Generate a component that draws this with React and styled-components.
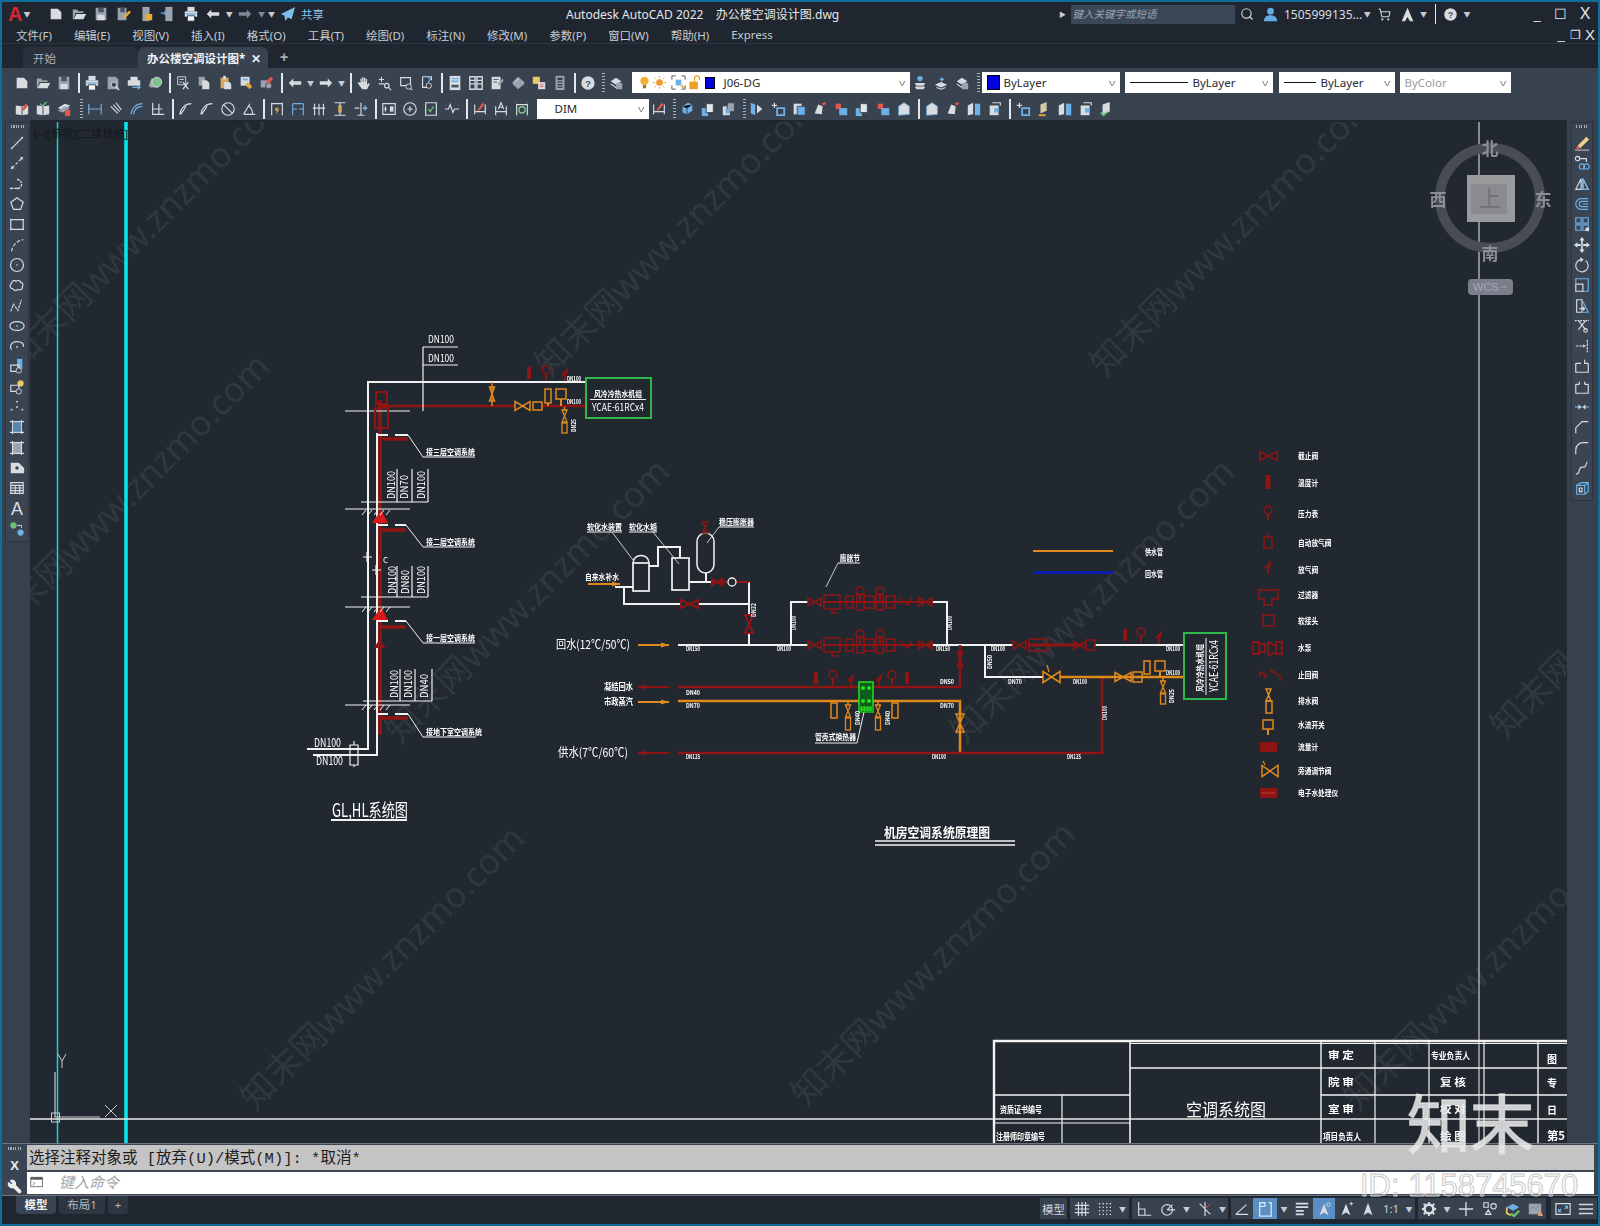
import React from 'react'
import styled, { createGlobalStyle } from 'styled-components'
import { Search, ShoppingCart, Wrench } from 'lucide-react'

const G = '#d8dce1'
const M = '#9aa3ae'
const B = '#6db0e6'
const O = '#e6a93c'
const RD = '#e2574c'
const WHITE = '#f2f2f2'
const RED = '#8f1414'
const ORG = '#e08a1e'
const GRN = '#2fb84a'

const CJK = '"Noto Sans", "Noto Sans CJK SC", sans-serif'

const Global = createGlobalStyle`
  html, body { margin: 0; padding: 0; background: #1f2630; overflow: hidden; }
  * { box-sizing: border-box; }
`

const Shell = styled.div`
  position: relative;
  width: 1600px;
  height: 1226px;
  border: 2px solid #0e6d99;
  background: #1f2630;
  display: flex;
  flex-direction: column;
  font-family: ${CJK};
  color: #d9dde2;
  overflow: hidden;
`
const TitleBar = styled.div`
  height: 22px;
  flex: none;
  display: flex;
  align-items: center;
  padding-top: 2px;
  font-size: 12px;
`
const Qat = styled.div`
  width: 564px;
  display: flex;
  align-items: center;
  padding-left: 6px;
`
const AppLogo = styled.span`
  color: #d8262c;
  font: 700 20px "Liberation Sans", sans-serif;
  width: 14px;
  line-height: 20px;
`
const Chev = styled.span`
  display: inline-block;
  width: ${p => p.$w || 10}px;
  flex: none;
  text-align: center;
  font-size: 7px;
  color: ${p => p.$c || '#c7ccd2'};
`
const QatBtn = styled.span`
  width: 22.4px;
  height: 20px;
  flex: none;
  display: flex;
  align-items: center;
  justify-content: center;
`
const Gap = styled.span`
  width: ${p => p.$w}px;
  flex: none;
`
const ShareText = styled.span`
  color: #8fc3ea;
  font-size: 11.5px;
  margin-left: 2px;
`
const DocTitle = styled.div`
  flex: none;
  font-size: 12px;
  color: #e4e7ea;
  white-space: pre;
`
const TitleRight = styled.div`
  margin-left: auto;
  display: flex;
  align-items: center;
`
const SearchBox = styled.div`
  width: 164px;
  height: 19px;
  margin-left: 4px;
  background: #3a4757;
  color: #98a4b2;
  font-size: 10.5px;
  font-style: italic;
  line-height: 19px;
  padding-left: 2px;
`
const UserName = styled.span`
  font-size: 12px;
  margin-left: 2px;
`
const WinBtn = styled.span`
  width: ${p => p.$w || 24}px;
  height: 20px;
  flex: none;
  display: flex;
  align-items: center;
  justify-content: center;
  font: 400 ${p => p.$f || 15}px "Liberation Sans", sans-serif;
  color: #e6e8eb;
`
const MenuBar = styled.div`
  height: 20px;
  flex: none;
  display: flex;
  align-items: center;
  padding-left: 14px;
  padding-top: 2px;
  gap: 22px;
  font-size: 11.5px;
  color: #c6ccd3;
  border-bottom: 1px solid #2d3540;
`
const MenuRight = styled.div`
  margin-left: auto;
  display: flex;
  align-items: center;
`
const Tabs = styled.div`
  height: 24px;
  flex: none;
  display: flex;
  align-items: flex-end;
  padding-left: 21px;
`
const Tab = styled.div`
  width: ${p => p.$w}px;
  height: 21px;
  background: ${p => (p.$on ? '#39424f' : '#2a313c')};
  color: ${p => (p.$on ? '#eef0f2' : '#a9b0b9')};
  font-size: 11.5px;
  font-weight: ${p => (p.$on ? 700 : 400)};
  line-height: 21px;
  padding-left: ${p => p.$pad}px;
  padding-top: 2px;
  border-radius: 6px 6px 0 0;
  display: flex;
  align-items: center;
  gap: 6px;
`
const TabPlus = styled.span`
  font: 700 14px "Liberation Sans", sans-serif;
  color: #aab1ba;
  margin-left: 12px;
  line-height: 21px;
`
const Band = styled.div`
  height: 52px;
  flex: none;
  background: #39424f;
`
const ToolRow = styled.div`
  height: ${p => p.$h}px;
  display: flex;
  align-items: center;
  padding-left: ${p => p.$pad || 0}px;
  padding-top: ${p => p.$top || 0}px;
`
const Btn = styled.span`
  width: 21px;
  height: 21px;
  flex: none;
  display: flex;
  align-items: center;
  justify-content: center;
`
const Sep = styled.span`
  width: ${p => p.$w || 7}px;
  height: 20px;
  flex: none;
  position: relative;
  &::after {
    content: '';
    position: absolute;
    left: 50%;
    top: 0;
    bottom: 0;
    width: ${p => (p.$grip ? 3 : 1.5)}px;
    background: ${p =>
      p.$grip
        ? 'repeating-linear-gradient(#a9b0ba 0 1px, transparent 1px 3px)'
        : '#e3e6ea'};
  }
`
const Combo = styled.div`
  width: ${p => p.$w}px;
  height: ${p => p.$h || 21}px;
  margin-left: ${p => p.$ml || 0}px;
  flex: none;
  background: #fff;
  color: ${p => p.$c || '#2a2a2a'};
  display: flex;
  align-items: center;
  font-size: 11.5px;
  padding: 0 5px;
  position: relative;
`
const ComboArrow = styled.span`
  margin-left: auto;
  color: #8a8a8a;
  font-size: 9px;
  transform: scaleX(1.4);
`
const Swatch = styled.span`
  width: ${p => p.$s || 10}px;
  height: ${p => p.$s2 || 12}px;
  background: #0000e0;
  border: 1px solid #000;
  flex: none;
`
const RuleLine = styled.span`
  width: ${p => p.$w}px;
  height: 1px;
  background: #111;
  margin-right: 5px;
  flex: none;
`
const Main = styled.div`
  flex: 1;
  min-height: 0;
  display: flex;
`
const Rail = styled.div`
  width: ${p => p.$w}px;
  flex: none;
  background: #37404d;
  padding: 2px ${p => p.$pr}px 0 ${p => p.$pl}px;
`
const RailPanel = styled.div`
  background: #3b4552;
  border: 1px solid #2c333e;
  display: flex;
  flex-direction: column;
  align-items: center;
  padding-top: 2px;
  padding-bottom: 2px;
`
const RailGrip = styled.span`
  width: 13px;
  height: 7px;
  flex: none;
  background: repeating-linear-gradient(90deg, #a9b0ba 0 1px, transparent 1px 2.5px);
  margin-bottom: 1px;
  background-size: 100% 3px;
  background-repeat: no-repeat;
`
const RailBtn = styled.span`
  height: 20.3px;
  width: 100%;
  flex: none;
  display: flex;
  align-items: center;
  justify-content: center;
`
const Canvas = styled.div`
  flex: 1;
  min-width: 0;
  position: relative;
  background: #212830;
  overflow: hidden;
  margin-top: 2px;
`
const CanvasSvg = styled.svg`
  display: block;
  width: 1537px;
  height: 1021px;
  filter: blur(0.35px);
`
const ViewLabel = styled.div`
  position: absolute;
  left: 4px;
  top: 3px;
  color: #14171b;
  font-size: 11px;
`
const CmdArea = styled.div`
  height: 52px;
  flex: none;
  display: flex;
  flex-direction: column;
  background: #3a4453;
  border-top: 1px solid #6f7681;
  position: relative;
  padding: 1px 4px 1px 25px;
`
const CmdTool = styled.div`
  position: absolute;
  left: 0;
  top: 0;
  bottom: 0;
  width: 25px;
  display: flex;
  flex-direction: column;
  align-items: center;
  padding-top: 3px;
  color: #eceef0;
`
const CmdX = styled.span`
  font: 700 13px "Liberation Sans", sans-serif;
  margin-top: 3px;
  height: 17px;
`
const CmdHistory = styled.div`
  height: 26px;
  background: #c4c4c4;
  color: #1c1c1c;
  font: 400 15.5px "Liberation Mono", "Noto Sans CJK SC", monospace;
  line-height: 29px;
  padding-left: 2px;
  white-space: pre;
  overflow: hidden;
`
const CmdInput = styled.div`
  height: 22px;
  margin-top: 2px;
  background: #fff;
  display: flex;
  align-items: center;
  padding: 0 0 3px 3px;
  color: #a4a4a4;
  font-size: 15px;
  font-style: italic;
  gap: 7px;
`
const StatusBar = styled.div`
  height: 29px;
  flex: none;
  display: flex;
  align-items: flex-start;
  padding-top: 2px;
  font-size: 11.5px;
  border-top: 1px solid #6f7681;
`
const LayoutTab = styled.div`
  width: ${p => p.$w}px;
  height: 18px;
  margin-top: -2px;
  background: ${p => (p.$on ? '#3a4351' : '#2e3641')};
  color: ${p => (p.$on ? '#f0f2f4' : '#b3b9c1')};
  font-weight: ${p => (p.$on ? 700 : 400)};
  font-size: 11.5px;
  text-align: center;
  line-height: 18px;
  border-radius: 0 0 4px 4px;
  margin-left: ${p => p.$ml || 0}px;
`
const StatusRight = styled.div`
  margin-left: auto;
  display: flex;
  gap: ${p => p.$gap || 3}px;
  padding-right: 1px;
`
const StatusGroup = styled.div`
  height: 21px;
  display: flex;
  align-items: center;
  background: #38414e;
  margin-left: ${p => p.$ml || 0}px;
`
const StatusCell = styled.span`
  width: ${p => p.$w || 22}px;
  height: 21px;
  flex: none;
  display: flex;
  align-items: center;
  justify-content: center;
  background: ${p => (p.$on ? '#5b8fc4' : 'transparent')};
  font-size: 11.5px;
  color: #cfd4da;
`
const StampCn = styled.div`
  position: absolute;
  left: 1405px;
  top: 1086px;
  font: 400 64px ${CJK};
  line-height: 72px;
  letter-spacing: -1px;
  color: rgba(236, 236, 236, 0.85);
  -webkit-text-stroke: 1.5px rgba(225, 225, 225, 0.8);
`
const StampId = styled.div`
  position: absolute;
  left: 1358px;
  top: 1168px;
  font: 400 31px "Liberation Sans", sans-serif;
  line-height: 32px;
  color: rgba(255, 255, 255, 0.25);
  -webkit-text-stroke: 1px #c9c9c9;
  white-space: pre;
`
const Mark = styled.text`
  font: 400 35px ${CJK};
  fill: rgba(255, 255, 255, 0.07);
`
const Cad = styled.text`
  font-family: "Noto Sans CJK SC", sans-serif;
  font-weight: ${p => p.$w || 700};
  fill: ${p => p.$c || '#ffffff'};
`

// toolbar / rail glyphs, all drawn on an 18x18 grid
const line = { fill: 'none', stroke: G, strokeWidth: 1.3 }
const blue = { fill: 'none', stroke: B, strokeWidth: 1.3 }
const dot = (x, y, c = G) => <circle cx={x} cy={y} r={1} fill={c} />

const ICONS = {
  doc: <path d="M3 3h8l4 4v8H3z" fill={G} />,
  open: <><path d="M2 4h5l1 2h6v2H5l-2 7H2z" fill={M} /><path d="M6 9h11l-3 6H3z" fill={G} /></>,
  save: <><path d="M3 2h12v14H3z" fill={M} /><path d="M6 2h6v5H6z" fill="#4a5361" /><path d="M5 10h8v6H5z" fill={G} /></>,
  saveas: <><path d="M3 2h10v14H3z" fill={M} /><path d="M6 2h5v5H6z" fill="#4a5361" /><path d="M9 15l2-5 5-5 2 2-5 5z" fill={O} /></>,
  phone: <><path d="M5 1h8v16H5z" fill={M} /><path d="M9 9h7v7H9z" fill={O} /></>,
  tablet: <><path d="M6 1h8v16H6z" fill={M} /><path d="M1 8h6M5 6l2 2-2 2" {...blue} /></>,
  print: <><path d="M5 1h8v5H5z" fill={G} /><path d="M2 6h14v6H2z" fill={G} /><path d="M5 11h8v6H5z" fill="#f4f5f6" stroke="#39424f" /><path d="M3 9h12" stroke={B} strokeWidth="1.5" /></>,
  preview: <><path d="M3 2h9l3 3v11H3z" fill={M} /><circle cx="10" cy="11" r="3" fill="#39424f" stroke={G} /><path d="M12 13l4 4" stroke={G} strokeWidth="1.5" /></>,
  plot: <><path d="M5 2h8v4H5zM2 6h14v6H2z" fill={G} /><path d="M7 14h9M13 12l3 2-3 2" {...blue} /></>,
  globe: <><path d="M2 12l3-8h8v10H4z" fill={M} /><circle cx="11" cy="8" r="5.5" fill="#7fc28e" stroke={G} /></>,
  cut: <><path d="M3 2h9v9H3z" fill="none" stroke={G} /><path d="M5 5h5M5 8h3" stroke={G} /><path d="M9 8l6 8M15 8l-6 8" stroke={G} strokeWidth="1.5" /></>,
  copy: <><path d="M3 2h7v10H3z" fill={M} /><path d="M7 6h5l3 3v7H7z" fill={G} /></>,
  paste: <><path d="M4 3h9v12H4z" fill="#d6a760" /><path d="M7 1h3v4H7z" fill={G} /><path d="M8 8h6l2 2v6H8z" fill={G} /></>,
  match: <><path d="M3 2h10v10H3z" fill={G} /><path d="M5 5h6" stroke={B} strokeWidth="2" /><path d="M8 11l3-3 5 5-3 3z" fill={O} /></>,
  brush: <><path d="M2 6h10v8H2z" fill={M} /><circle cx="11" cy="12" r="3.5" fill={M} stroke="#39424f" /><path d="M8 8l5-6 3 2-5 6z" fill={RD} /></>,
  undo: <path d="M7 4L2 9l5 5v-3h9V7H7z" fill={G} />,
  redo: <path d="M11 4l5 5-5 5v-3H2V7h9z" fill={G} />,
  redoD: <path d="M11 4l5 5-5 5v-3H2V7h9z" fill="#7f8894" />,
  hand: <path d="M5 9V4h1.5v4H7V2.5h1.5V8H9V3h1.5v5h.5V4.5h1.5V11l2-2 1 1-3 6H7l-3-4-2-3 1-1z" fill={G} />,
  zoomrt: <><path d="M5 2v6M2 5h6M2 10h6" stroke={G} strokeWidth="1.2" /><circle cx="11" cy="12" r="2.5" {...line} /><path d="M13 14l3 3" {...line} /></>,
  zoomwin: <><path d="M3 3h11v9H3z" {...line} /><circle cx="12" cy="13" r="3" fill="#39424f" stroke={G} /><path d="M14 15l2 2" {...line} /></>,
  zoomprev: <><path d="M4 2h10v4M4 2v12h5" {...line} /><path d="M10 2l3 3-3 3" {...blue} /><circle cx="11" cy="12" r="3" fill="none" stroke={G} /></>,
  props: <><path d="M3 1h12v16H3z" fill={G} /><path d="M5 4h8M5 7h8" stroke={B} strokeWidth="1.5" /><path d="M5 11h8v3H5z" fill="#4a5361" /></>,
  palette: <path d="M2 2h6v14H2zM10 2h6v14h-6zM2 6h6M2 10h6M10 6h6M10 10h6" fill="none" stroke={G} strokeWidth="1.5" />,
  sheet: <><path d="M3 2h10v14H3z" fill={G} /><path d="M5 5h6M5 8h4" stroke="#4a5361" /><path d="M10 9l6-5v3l-5 5z" fill={M} /></>,
  markup: <><path d="M3 8l6-6 7 6v2l-7 6-6-6z" fill={M} /><path d="M6 8l4-4" stroke={G} /></>,
  sticky: <><path d="M2 2h8v8H2z" fill="#e8c860" /><path d="M8 8h8v8H8z" fill={G} /><path d="M10 11h4M10 13h4" stroke={RD} /></>,
  calc: <><path d="M4 1h10v16H4z" fill={M} /><path d="M6 3h6v3H6z" fill="#39424f" /><path d="M6 8h6M6 11h6M6 14h6" stroke="#39424f" strokeWidth="1.5" /></>,
  help: <><circle cx="9" cy="9" r="7.5" fill={G} /><text x="9" y="13" textAnchor="middle" fontSize="11" fontWeight="700" fontFamily="Liberation Sans" fill="#4a5361">?</text></>,
  layers: <><path d="M3 7l6-4 6 4-6 4z" fill={G} /><path d="M3 10l6 4 6-4" {...line} /><path d="M9 9h7v7H9z" fill={M} /></>,
  layerP: <><circle cx="9" cy="4" r="3" fill={B} /><path d="M3 9h12l-2 3H5z" fill={G} /><path d="M3 13h12l-2 3H5z" fill={G} /></>,
  layerW: <><path d="M10 2l1 2 2 1-2 1-1 2-1-2-2-1 2-1z" fill={B} /><path d="M2 11l7-3 7 3-7 3z" fill={G} /><path d="M4 14l5 2 5-2" {...line} /></>,
  bulb: <><circle cx="9" cy="7" r="5" fill="#f1b233" /><path d="M7 12h4v4H7z" fill="#8a7a50" /></>,
  sun: <><circle cx="9" cy="9" r="4" fill="#f39a2a" /><path d="M9 1v3M9 14v3M1 9h3M14 9h3M3 3l2 2M13 13l2 2M3 15l2-2M13 5l2-2" stroke="#f39a2a" /></>,
  freeze: <><path d="M2 2h4M2 2v4M16 2h-4M16 2v4M2 16h4M2 16v-4M16 16h-4M16 16v-4" stroke="#555" /><path d="M6 6h6v6H6z" fill={B} /><path d="M12 12l3 3" stroke={O} strokeWidth="2" /></>,
  lock: <><path d="M3 8h10v9H3z" fill="#eba024" /><path d="M9 8V4a3 3 0 0 1 6 0v2" fill="none" stroke="#eba024" strokeWidth="1.5" /></>,
  dimline: <><path d="M2 3v12M16 3v12M2 9h14" {...blue} /></>,
  dimalign: <><path d="M3 6l8 8M9 2l6 8M6 4l7 8" {...line} /></>,
  dimarc: <path d="M2 15C3 8 8 3 15 3M5 15C6 9 10 6 15 6" {...blue} />,
  dimord: <><path d="M3 2v13h13M3 9h11M10 3v12" {...line} /></>,
  dimrad: <path d="M2 15C3 8 8 3 15 3M3 15L9 6" {...line} />,
  dimdia: <><circle cx="9" cy="9" r="7" {...line} /><path d="M4 4l10 10" {...line} /></>,
  dimang: <path d="M3 15h13M3 15L10 3M9 6c3 2 4 5 4 9" {...line} />,
  dimspace: <><path d="M3 2v14M15 2v14M3 3h12" {...line} /><path d="M7 8l4-1-2 3 3-1-4 6 1-4H7z" fill={O} /></>,
  dimbrk: <path d="M3 3v13M15 3v13M3 9h5M10 9h5M3 3h12" {...blue} />,
  dimtri: <path d="M4 3v13M9 3v13M14 3v13M2 8h14" {...line} />,
  dimins: <><path d="M3 2h12M3 16h12M9 2v14" {...line} /><path d="M7 5h4v8H7z" fill="#d6a760" /></>,
  dimjog: <><path d="M9 2v14M2 8h5M11 8h5M5 16h8" {...line} /><path d="M13 5l2 3-2 3" {...blue} /></>,
  dimbox: <><path d="M2 3h14v12H2z" {...line} /><path d="M5 6v6M3 9h4" {...line} /><path d="M10 6h4v6h-4z" fill={G} /></>,
  circledot: <><circle cx="9" cy="9" r="7" {...line} /><path d="M6 9h6M9 6v6" {...line} /></>,
  inspect: <><path d="M3 2h12v14H3z" {...line} /><path d="M6 9l2 3 4-6" stroke="#6ac27a" fill="none" strokeWidth="1.5" /></>,
  jog: <path d="M1 9h4l2-5 3 9 2-4h5" {...line} />,
  dimstyle: <><path d="M3 4v11M15 4v11M3 12h12" {...line} /><path d="M6 10l6-8 2 2-6 7z" fill={RD} /></>,
  dimA: <><path d="M3 6v10M15 6v10M3 12h12" {...line} /><path d="M6 9l3-7 3 7M7 7h4" {...line} /></>,
  dimup: <><path d="M3 3v13M15 3v13M3 4h12" {...line} /><circle cx="9" cy="10" r="3.5" fill="none" stroke="#7cc48a" strokeWidth="1.5" /></>,
  book: <><path d="M2 5l7 1 7-1v10l-7 1-7-1z" fill={G} /><path d="M9 6v10" stroke="#39424f" /><path d="M9 9l4-6 3 2-5 6z" fill={RD} /></>,
  bookok: <><path d="M2 5l7 1 7-1v10l-7 1-7-1z" fill={G} /><path d="M9 6v10" stroke="#39424f" /><path d="M6 3l2 3 5-5" stroke="#6ac27a" fill="none" strokeWidth="1.5" /></>,
  stack: <><path d="M2 8l8-5 6 2-8 5z" fill={G} /><path d="M2 11l8-5 6 2-8 5z" fill={M} /><path d="M10 10h6v7h-6z" fill={RD} /></>,
  cube: <><path d="M4 6l6-4 5 2v7l-6 4-5-2z" fill={B} /><path d="M4 6l5 2 6-4M9 8v7" stroke="#39424f" /></>,
  cubes: <><path d="M2 8h7v9H2z" fill={B} /><path d="M7 3h8v10H7z" fill="#e4e7ea" stroke="#39424f" /></>,
  cubes2: <><path d="M2 6h8v10H2z" fill={G} /><path d="M7 2h8v10H7z" fill={M} stroke="#39424f" /><path d="M5 9h5v5H5z" fill={B} /></>,
  splitB: <><path d="M2 2l5 2v12l-5-2z" fill={B} /><path d="M9 4l6 5-6 5z" fill={G} /></>,
  plusB: <><path d="M2 5h6M5 2v6" stroke={G} strokeWidth="1.4" /><path d="M8 8h8v8H8z" fill="none" stroke={B} strokeWidth="2" /></>,
  box: <><path d="M3 3h9v12H3z" fill={G} /><path d="M7 6h9v10H7z" fill={B} stroke="#39424f" /></>,
  flaker: <><path d="M3 14l4-10 5 2-1 9z" fill={G} /><path d="M11 3l3-2 2 2-3 2z" fill={RD} /></>,
  boxes: <><path d="M3 3h6v6H3z" fill={RD} /><path d="M7 8h9v8H7z" fill={B} /></>,
  shell: <path d="M3 6l6-4 6 4v9l-12 1z" fill={G} stroke={B} />,
  twin: <><path d="M2 5l6-3v13l-6 1z" fill={G} /><path d="M10 3h6v13h-6z" fill={B} /></>,
  chBox: <><path d="M3 5h10v11H3z" fill={G} /><path d="M6 2h9v3" {...line} /><path d="M8 8h5v5H8z" fill={B} /></>,
  lite: <><path d="M5 14V4l7-3v10z" fill="#d5c9a4" /><path d="M3 16h8" stroke={O} strokeWidth="2" /></>,
  lay: <><path d="M4 15V4l8-3v11z" fill={G} /><path d="M2 13l3 3 5-4" stroke="#6ac27a" fill="none" strokeWidth="2" /></>,
  // left rail
  rline: <><path d="M3 15L15 3" {...line} />{dot(3, 15)}{dot(15, 3)}</>,
  rxline: <><path d="M4 14L14 4" {...line} strokeDasharray="3 2" /><path d="M2 16l4-1-3-3zM16 2l-1 4-3-3z" fill={G} /></>,
  rpline: <><path d="M2 14h8M10 14c5 0 6-9 0-10" {...line} strokeDasharray="3 1" />{dot(2, 14)}{dot(10, 14)}{dot(10, 4)}</>,
  rpoly: <path d="M9 2l7 5-3 8H5L2 7z" {...line} />,
  rrect: <><path d="M2 4h14v11H2z" {...line} />{dot(2, 4)}{dot(16, 4)}{dot(2, 15)}{dot(16, 15)}</>,
  rarc: <path d="M3 16C4 9 9 4 16 3" {...line} strokeDasharray="4 2" />,
  rcircle: <><circle cx="9" cy="9" r="7.3" {...line} />{dot(9, 9, B)}</>,
  rcloud: <path d="M3 7c0-3 4-4 5-2 2-2 5-1 5 1 3 0 3 4 2 5 1 3-3 4-5 3-2 2-5 1-6-1-3 0-4-4-1-6z" {...line} />,
  rspline: <path d="M2 15L5 7l5 7 4-12" {...line} strokeDasharray="3 1" />,
  rellipse: <><ellipse cx="9" cy="9" rx="8" ry="5" {...line} />{dot(9, 9, B)}</>,
  rearc: <><path d="M3 13C0 9 3 4 9 4s8 3 7 6" {...line} />{dot(9, 10, G)}</>,
  rins: <><path d="M9 1h6v11H9z" fill={B} /><path d="M2 8h9v7H2z" {...line} /><circle cx="11" cy="14" r="3" fill="#3b4552" stroke={G} /></>,
  rins2: <><circle cx="13" cy="5" r="3.5" fill="#e8c860" /><path d="M2 7h9v7H2z" {...line} /><circle cx="11" cy="14" r="3" fill="#3b4552" stroke={G} /></>,
  rpoint: <>{dot(9, 3)}{dot(3, 12)}{dot(15, 12)}{dot(9, 9)}</>,
  rhatch: <><path d="M4 3h10v12H4zM1 3h16M1 15h16M4 1v16M14 1v16" {...line} /><path d="M4 3h10v12H4z" fill={B} opacity=".6" /></>,
  rgrad: <><path d="M4 3h10v12H4z" fill={M} /><path d="M1 3h16M1 15h16M4 1v16M14 1v16" {...line} /></>,
  rregion: <><path d="M2 3h9l6 6v6H2z" fill={G} /><circle cx="9" cy="9" r="2" fill="#3b4552" /></>,
  rtable: <path d="M2 3h14v12H2zM2 6h14M2 9h14M2 12h14M7 6v9M12 6v9" {...line} />,
  rtext: <text x="9" y="16.5" textAnchor="middle" fontSize="20" fontFamily="Liberation Sans" fill={G}>A</text>,
  rgroup: <><circle cx="5" cy="5" r="3.5" fill="#6ac27a" /><circle cx="13" cy="13" r="3.5" fill={B} /><path d="M9 5h5v3" stroke={G} fill="none" /></>,
  // right rail
  erase: <><path d="M4 12L14 2l3 3-10 10z" fill="#f1cf92" /><path d="M4 12l3 3-3 1-2-1z" fill={RD} /><path d="M1 17h16" stroke={G} /></>,
  copyr: <><circle cx="4" cy="4" r="2.5" {...line} /><path d="M7 4h7v4" {...line} /><circle cx="9" cy="13" r="3" {...blue} /><circle cx="14" cy="13" r="3" {...blue} /></>,
  mirror: <><path d="M8 3v12H2zM10 3v12h6z" {...line} /><path d="M10 3v12h6z" {...blue} /></>,
  offset: <path d="M16 3H8a5 5 0 0 0 0 12h8M16 6H9a3 3 0 0 0 0 6h7M16 9h-6" {...blue} />,
  array: <><path d="M2 2h6v6H2zM10 2h6v6h-6zM2 10h6v6H2zM10 10h6v6h-6z" {...blue} /><path d="M13 13h4v4h-4z" fill={G} /></>,
  moves: <><path d="M9 1v16M1 9h16" stroke={G} strokeWidth="2" /><path d="M9 0l3 4H6zM9 18l3-4H6zM0 9l4-3v6zM18 9l-4-3v6z" fill={G} /><circle cx="9" cy="9" r="1.5" fill={B} /></>,
  rotate: <><path d="M13 4a7 7 0 1 1-6-1" {...line} /><path d="M7 0l4 3-4 3z" fill={G} /></>,
  scale: <><path d="M2 7V2h14v14H8" {...blue} /><path d="M2 8h8v8H2z" {...line} /></>,
  stretch: <><path d="M3 2h6v14H3z" {...line} /><path d="M9 2l7 14H9" {...blue} /><path d="M6 12h6M10 10l2 2-2 2" {...line} /></>,
  trim: <><path d="M1 3h16" {...line} strokeDasharray="2 1" /><path d="M5 3l8 10M13 3l-8 10" {...line} /><circle cx="13" cy="14" r="2" {...line} /></>,
  extend: <><path d="M15 2v14M2 9h11" {...line} strokeDasharray="3 1" /><path d="M10 7l3 2-3 2" fill={G} /></>,
  brk: <path d="M2 6v10h14V6M2 6h6M12 2v4h4" {...line} />,
  brk2: <path d="M2 6v10h14V6M2 6h4M12 6h4M6 3v3M12 3v3" {...line} />,
  join: <><path d="M1 9h16" {...blue} /><path d="M5 6l3 3-3 3zM13 6l-3 3 3 3z" fill={G} /></>,
  chamfer: <path d="M2 16V10l7-7h7" {...line} />,
  fillet: <path d="M2 16v-5a8 8 0 0 1 8-8h6" {...line} />,
  blend: <path d="M2 16c6 0 2-8 7-8s3 0 6-6" {...line} />,
  explode: <><path d="M3 6l5-3h8v10l-4 3H3z" {...blue} /><path d="M3 6h9v10M12 6l4-3" {...blue} /><path d="M6 9h3v4H6z" {...line} /></>,
  // status
  grid: <path d="M1 5h16M1 9h16M1 13h16M5 1v16M9 1v16M13 1v16" {...line} />,
  snap: <>{[3, 7, 11, 15].map(x => [3, 7, 11, 15].map(y => <circle key={x * 100 + y} cx={x} cy={y} r=".9" fill={G} />))}</>,
  ortho: <path d="M3 1v15h14M3 9h7v7" {...line} />,
  polar: <><circle cx="8" cy="10" r="6" {...line} /><path d="M8 10h9M8 10l6-6" {...line} /></>,
  osnap: <><path d="M3 3l12 12M9 1v16" {...line} /><path d="M9 9l6-6" stroke={RD} /></>,
  angle: <path d="M2 15h14M2 15L14 4" {...line} />,
  osbox: <path d="M3 2h6v4H3zM3 6v11h13V2h-3" fill="none" stroke="#cfe5f7" strokeWidth="1.5" />,
  lw: <path d="M2 3h14M2 7h14M2 11h9M2 15h9" stroke={G} strokeWidth="2" />,
  annoA: <><path d="M9 3l5 13-5-3-5 3z" fill={G} /><circle cx="14" cy="4" r="2" fill="none" stroke={G} /></>,
  annoB: <><path d="M9 3l5 13-5-3-5 3z" fill={G} /><path d="M13 3h4M15 1v4" stroke={G} /></>,
  annoC: <path d="M9 2l5 14-5-3-5 3z" fill={G} />,
  gear: <><circle cx="9" cy="9" r="5" fill="none" stroke={G} strokeWidth="3" /><path d="M9 1v3M9 14v3M1 9h3M14 9h3M3 3l2 2M13 13l2 2M3 15l2-2M13 5l2-2" stroke={G} strokeWidth="2" /></>,
  cross: <path d="M9 1v16M1 9h16" stroke={G} strokeWidth="1.5" />,
  iso: <><path d="M2 2h5v5H2zM4 15l3-5 3 5z" {...line} /><circle cx="13" cy="6" r="3" {...line} /></>,
  workspace: <><path d="M2 7l7-4 7 4-7 4z" fill={B} /><path d="M2 7v7l5 2" stroke="#e8c860" strokeWidth="2" fill="none" /><path d="M7 14l3 3 6-6" stroke="#6ac27a" fill="none" strokeWidth="2.5" /></>,
  perf: <><path d="M2 3h14v12H2z" fill={M} /><path d="M3 11l4-5 3 3 4-5" stroke="#6c9a7a" fill="none" /><path d="M12 17l3-7 3 7z" fill="#e79a72" /></>,
  full: <><path d="M1 3h16v12H1z" {...line} /><path d="M11 6h3v3M14 6l-3 3M7 12H4V9M4 12l3-3" {...blue} /></>,
  menu: <path d="M1 4h16M1 9h16M1 14h16" stroke={G} strokeWidth="1.6" />,
  prompt: <><path d="M1 3h15v12H1z" fill="#fff" stroke="#555" /><path d="M1 3h15v3H1z" fill="#555" /><path d="M4 9l2 2-2 2" stroke="#555" fill="none" /></>,
  share: <path d="M17 1L1 9l4 2 1 6 3-4 4 2z" fill="#7ebde9" />,
  user: <><circle cx="9" cy="5" r="4" fill="#63abe3" /><path d="M1 17c0-5 4-7 8-7s8 2 8 7z" fill="#63abe3" /></>,
  acad: <><path d="M9 1L2 17h4l3-5 3 5h4z" fill={G} /></>
}

const Icon = ({ n, s = 16 }) => <svg width={s} height={s} viewBox="0 0 18 18">{ICONS[n]}</svg>

const row1a = [['doc', 'open', 'save'], ['print', 'preview', 'plot', 'globe'], ['cut', 'copy', 'paste', 'match', 'brush']]
const row1b = [['hand', 'zoomrt', 'zoomwin', 'zoomprev'], ['props', 'palette', 'sheet', 'markup', 'sticky', 'calc'], ['help']]
const row2a = [['dimline', 'dimalign', 'dimarc', 'dimord'], ['dimrad', 'dimrad', 'dimdia', 'dimang'], ['dimspace', 'dimbrk', 'dimtri', 'dimins', 'dimjog'], ['dimbox', 'circledot', 'inspect', 'jog'], ['dimstyle', 'dimA', 'dimup']]
const row2b = ['cube', 'cubes', 'cubes2']
const row2c = [['splitB', 'plusB', 'box', 'flaker', 'boxes', 'cubes', 'boxes', 'shell'], ['shell', 'flaker', 'twin', 'chBox'], ['plusB', 'lite', 'twin', 'chBox', 'lay']]
const leftTools = ['rline', 'rxline', 'rpline', 'rpoly', 'rrect', 'rarc', 'rcircle', 'rcloud', 'rspline', 'rellipse', 'rearc', 'rins', 'rins2', 'rpoint', 'rhatch', 'rgrad', 'rregion', 'rtable', 'rtext', 'rgroup']
const rightTools = ['erase', 'copyr', 'mirror', 'offset', 'array', 'moves', 'rotate', 'scale', 'stretch', 'trim', 'extend', 'brk', 'brk2', 'join', 'chamfer', 'fillet', 'blend', 'explode']
const menus = ['文件(F)', '编辑(E)', '视图(V)', '插入(I)', '格式(O)', '工具(T)', '绘图(D)', '标注(N)', '修改(M)', '参数(P)', '窗口(W)', '帮助(H)', 'Express']

const Tools = ({ groups, sep = true }) => groups.map((g, i) => (
  <React.Fragment key={i}>
    {g.map((n, j) => <Btn key={j}><Icon n={n} /></Btn>)}
    {sep && i < groups.length - 1 && <Sep />}
  </React.Fragment>
))

// drawing parts, page coordinates
const P = ({ p, c = WHITE, w = 2 }) => <polyline points={p} fill="none" stroke={c} strokeWidth={w} />
const Bow = ({ x, y, w = 14, h = 8, c = RED, sw = 1.5, v }) => (
  <polygon
    points={v
      ? `${x - h / 2},${y} ${x + h / 2},${y + w} ${x - h / 2},${y + w} ${x + h / 2},${y}`
      : `${x},${y - h / 2} ${x + w},${y + h / 2} ${x + w},${y - h / 2} ${x},${y + h / 2}`}
    fill="none" stroke={c} strokeWidth={sw}
  />
)
const Box = ({ x, y, w, h, c = RED, sw = 1.5 }) => <rect x={x} y={y} width={w} height={h} fill="none" stroke={c} strokeWidth={sw} />
const Therm = ({ x, y, c = RED }) => <rect x={x - 2} y={y} width={4} height={12} fill={c} />
const Gauge = ({ x, y, c = RED }) => <><circle cx={x} cy={y + 4} r={4} fill="none" stroke={c} strokeWidth={1.5} /><path d={`M${x - 1} ${y + 8}h2v6h-2z`} fill={c} /></>
const Air = ({ x, y, c = RED }) => <path d={`M${x} ${y + 12}V${y + 5}M${x - 3} ${y + 6}l5-5-1 5`} fill="none" stroke={c} strokeWidth={1.8} />
const DropValve = ({ x, y, c = ORG, h = 26 }) => (
  <>
    <P p={`${x},${y} ${x},${y + 3}`} c={c} w={1.5} />
    <Bow x={x} y={y + 3} w={12} h={5} c={c} v sw={1.3} />
    <Box x={x - 2.5} y={y + 16} w={5} h={h - 16} c={c} sw={1.3} />
  </>
)
const Small = ({ x, y, t, v, len = 14, size = 6 }) => (
  <Cad x={x} y={y} fontSize={size} textLength={len} lengthAdjust="spacingAndGlyphs" transform={v ? `rotate(-90 ${x} ${y})` : undefined}>{t}</Cad>
)
const Label = ({ x, y, t, len, size = 8 }) => <Cad x={x} y={y} fontSize={size} textLength={len} lengthAdjust="spacingAndGlyphs">{t}</Cad>
const Arrow = ({ x1, x2, y, c }) => {
  const right = x2 > x1
  const m = right ? x2 - 8 : x2 + 8
  return <><P p={`${x1},${y} ${x2},${y}`} c={c} w={2} /><polygon points={`${m},${y - 2.5} ${x2},${y} ${m},${y + 2.5}`} fill={c} /></>
}
const Equip = ({ y }) => (
  <>
    <Bow x={808} y={y} w={13} h={8} />
    <Box x={824} y={y - 7} w={16} h={14} />
    <P p={`823,${y} 933,${y}`} c={RED} w={2} />
    <P p={`832,${y + 7} 832,${y + 11} 838,${y + 11}`} c={RED} w={1.5} />
    <Box x={846} y={y - 6} w={7} h={12} />
    <Box x={857} y={y - 8} w={7} h={16} />
    <Box x={864} y={y - 6} w={10} h={12} />
    <Gauge x={860} y={y - 15} />
    <Box x={876} y={y - 8} w={7} h={16} />
    <Gauge x={880} y={y - 15} />
    <Box x={886} y={y - 6} w={9} h={12} />
    <P p={`900,${y - 4} 908,${y + 3} 912,${y - 4}`} c={RED} w={1.5} />
    <Bow x={919} y={y} w={13} h={8} />
  </>
)

const marks = [
  [20, 372], [0, 640], [550, 378], [1105, 378], [400, 745], [965, 745], [1505, 740], [255, 1112], [806, 1108], [1358, 1112]
]

const legend = [
  [456, '截止阀'], [483, '温度计'], [514, '压力表'], [543, '自动放气阀'], [570, '放气阀'], [595, '过滤器'], [621, '软接头'],
  [648, '水泵'], [675, '止回阀'], [701, '排水阀'], [725, '水流开关'], [747, '流量计'], [771, '旁通调节阀'], [793, '电子水处理仪']
]

const Drawing = () => (
  <CanvasSvg viewBox="30 122 1537 1021">
    {marks.map(([x, y], i) => (
      <Mark key={i} x={x} y={y} transform={`rotate(-45 ${x} ${y})`}>知末网www.znzmo.com</Mark>
    ))}

    <line x1={57.5} y1={122} x2={57.5} y2={1143} stroke="#12d4dc" strokeWidth={1.5} />
    <line x1={126} y1={122} x2={126} y2={1143} stroke="#08e6ef" strokeWidth={3.5} />
    <line x1={1479} y1={122} x2={1479} y2={1143} stroke="#eeeeee" strokeWidth={1} />
    <line x1={30} y1={1119} x2={1567} y2={1119} stroke="#e8e8e8" strokeWidth={1.3} />

    {/* ucs icon */}
    <P p="55,1072 55,1117 100,1117" c="#c9cccf" w={1.2} />
    <Box x={51.5} y={1113} w={8} h={9} c="#c9cccf" sw={1} />
    <P p="58,1054 62,1061 66,1054" c="#c9cccf" w={1} />
    <P p="62,1061 62,1068" c="#c9cccf" w={1} />
    <P p="105,1105 117,1117" c="#c9cccf" w={1} />
    <P p="117,1105 105,1117" c="#c9cccf" w={1} />

    {/* GL, HL system */}
    <P p="587,382 368,382 368,749 307,749" w={2} />
    <P p="377,433 377,755 313,755" w={2} />
    <P p="380,400 380,735" c={RED} w={3.5} />
    <P p="378,406 515,406" c={RED} w={2.5} />
    <P p="542,406 585,406" c={RED} w={2.5} />
    <P p="423,347 423,411" w={1.2} />
    <P p="423,347 458,347" w={1.2} />
    <P p="423,365 458,365" w={1.2} />
    <Cad x={428} y={343} fontSize={11} $w={400} textLength={26} lengthAdjust="spacingAndGlyphs">DN100</Cad>
    <Cad x={428} y={362} fontSize={11} $w={400} textLength={26} lengthAdjust="spacingAndGlyphs">DN100</Cad>
    {[[411, 345], [509, 345], [607, 345], [705, 345]].map(([y, x]) => <P key={y} p={`${x},${y} 410,${y}`} w={1.2} />)}
    {[[502, 361, 428], [597, 361, 428], [701, 363, 432]].map(([y, a, b]) => <P key={y} p={`${a},${y} ${b},${y}`} w={1.2} />)}
    <path d="M376 392h11v12h-11zM375 408h13v20h-13z" fill="none" stroke={RED} strokeWidth="2" />
    <polygon points="381,510 372,523 388,523" fill="#d81a1a" />
    <polygon points="381,607 372,620 388,620" fill="#d81a1a" />
    <polygon points="379,640 374,648 386,648" fill={RED} />
    {[510, 607, 705].map(y => [362, 368, 374, 380, 386].map(x => <P key={x + y * 10} p={`${x},${y + 5} ${x + 4},${y}`} w={1} />))}
    {[[435, 388, 395, 408, 439], [525, 388, 395, 406, 530], [621, 388, 395, 406, 627], [714, 388, 395, 408, 718]].map(([y, a, b, c, r]) => (
      <g key={y}>
        <P p={`377,${y} ${a},${y}`} w={2} />
        <P p={`${b},${y} ${c},${y}`} w={2} />
        <P p={`380,${r} ${c},${r}`} c={RED} w={3.5} />
      </g>
    ))}
    <P p="408,435 423,457 475,457" w={1} />
    <P p="406,525 423,547 475,547" w={1} />
    <P p="406,621 423,643 475,643" w={1} />
    <P p="408,714 423,737 476,737" w={1} />
    <Label x={426} y={455} t="接三层空调系统" len={49} />
    <Label x={426} y={545} t="接二层空调系统" len={49} />
    <Label x={426} y={641} t="接一层空调系统" len={49} />
    <Label x={426} y={735} t="接地下室空调系统" len={56} />
    {[[397, 412, 428, 469, 502], [397, 412, 428, 566, 597], [400, 415, 432, 669, 701]].map(([a, b, c, t, e]) => (
      <g key={t}>
        <P p={`${a},${t} ${a},${e}`} w={1.2} />
        <P p={`${b},${t} ${b},${e}`} w={1.2} />
        <P p={`${c},${t} ${c},${e}`} w={1.2} />
      </g>
    ))}
    {[[395, 499, 'DN100'], [408, 499, 'DN70'], [425, 499, 'DN100'], [396, 594, 'DN100'], [409, 594, 'DN80'], [425, 594, 'DN100'], [398, 698, 'DN100'], [412, 698, 'DN100'], [428, 698, 'DN40']].map(([x, y, t]) => (
      <Cad key={x + '' + y} x={x} y={y} fontSize={11} $w={400} textLength={t === 'DN100' ? 28 : 24} lengthAdjust="spacingAndGlyphs" transform={`rotate(-90 ${x} ${y})`}>{t}</Cad>
    ))}
    <path d="M363 557h9M367 552v10M372 570h9M376 565v10" stroke={WHITE} strokeWidth="1.2" fill="none" />
    <Cad x={383} y={563} fontSize={8} $w={400}>C</Cad>
    <Cad x={314} y={747} fontSize={12} $w={400} textLength={27} lengthAdjust="spacingAndGlyphs">DN100</Cad>
    <Cad x={316} y={765} fontSize={12} $w={400} textLength={27} lengthAdjust="spacingAndGlyphs">DN100</Cad>
    <path d="M350 745h8v20h-8zM350 755h8M354 741v4M354 765v2" fill="none" stroke={WHITE} strokeWidth="1.2" />
    <Cad x={332} y={817} fontSize={18} $w={400} textLength={76} lengthAdjust="spacingAndGlyphs">GL,HL系统图</Cad>
    <P p="331,820 407,820" w={2} />

    {/* cooling unit 1 */}
    <Therm x={529} y={367} />
    <Gauge x={546} y={366} />
    <Air x={565} y={369} />
    <Small x={567} y={381} t="DN100" />
    <Small x={567} y={404} t="DN100" />
    <P p="492,382 492,406" c={ORG} w={1.5} />
    <Bow x={492} y={387} w={14} h={5} c={ORG} v />
    <Bow x={515} y={406} w={15} h={9} c={ORG} />
    <Box x={533} y={402} w={9} h={8} c={ORG} />
    <Box x={545} y={389} w={6} h={14} c={ORG} />
    <P p="548,403 548,406" c={ORG} />
    <Box x={556} y={389} w={10} h={10} c={ORG} />
    <P p="561,399 561,406" c={ORG} />
    <DropValve x={564.5} y={407} h={26} />
    <Small x={576} y={432} t="DN25" v len={13} />
    <rect x={586} y={378} width={65} height={40} fill="none" stroke={GRN} strokeWidth={2} />
    <Label x={594} y={397} t="风冷冷热水机组" len={48} />
    <P p="590,399.5 646,399.5" w={1} />
    <Cad x={592} y={411} fontSize={11} $w={400} textLength={52} lengthAdjust="spacingAndGlyphs">YCAE-61RCx4</Cad>

    {/* make-up water */}
    <P p="615,587 633,587" />
    <P p="624,587 624,604 681,604" />
    <P p="698,604 749,604" />
    <P p="749,582 749,615" />
    <P p="749,633 749,645" />
    <Bow x={681} y={604} w={17} h={8} c={RED} sw={2} />
    <Bow x={749} y={615} w={18} h={8} c={RED} v sw={2} />
    <Box x={633} y={563} w={16} h={28} c={WHITE} sw={1.7} />
    <path d="M633 563c0-10 16-10 16 0" fill="none" stroke={WHITE} strokeWidth="1.5" />
    <P p="649,566 658,566 658,547 680,547 680,558" />
    <Box x={672} y={558} w={17} h={32} c={WHITE} sw={1.7} />
    <P p="689,582 712,582" />
    <P p="706,573 706,582" />
    <P p="712,582 749,582" c={RED} w={2} />
    <Bow x={712} y={582} w={10} h={6} c={RED} sw={2} />
    <circle cx={732} cy={582} r={4} fill="#212830" stroke={WHITE} strokeWidth="1.3" />
    <rect x={697} y={533} width={17} height={40} rx={8.5} fill="none" stroke={WHITE} strokeWidth={1.5} />
    <Bow x={705} y={522} w={11} h={5} c={RED} v sw={1.5} />
    <P p="612,532 633,560" w={.8} />
    <P p="653,532 679,564" w={.8} />
    <P p="707,543 719,527" w={.8} />
    <P p="587,532 622,532" w={1} />
    <P p="629,532 657,532" w={1} />
    <P p="719,527 754,527" w={1} />
    <Label x={587} y={530} t="软化水装置" len={35} />
    <Label x={629} y={530} t="软化水箱" len={28} />
    <Label x={719} y={525} t="稳压膨胀器" len={35} />
    <Label x={585} y={580} t="自来水补水" len={34} />
    <Arrow x1={588} x2={620} y={584} c={ORG} />
    <P p="838,563 826,587" w={.8} />
    <P p="838,563 860,563" w={1} />
    <Label x={840} y={561} t="膨胀节" len={20} />

    {/* main pipes */}
    <P p="678,645 808,645" />
    <P p="791,645 791,602 808,602" />
    <P p="933,602 947,602 947,645" />
    <P p="933,645 1013,645" />
    <P p="1095,645 1184,645" />
    <Equip y={602} />
    <Equip y={645} />
    <P p="985,645 985,677 1043,677" />
    <Bow x={1013} y={645} w={13} h={8} />
    <Box x={1029} y={639} w={18} h={12} />
    <P p="1028,645 1083,645" c={RED} w={3} />
    <Bow x={1074} y={645} w={12} h={8} />
    <Box x={1086} y={640} w={9} h={10} />
    <Therm x={1125} y={629} />
    <Gauge x={1141} y={628} />
    <Air x={1159} y={632} />

    <P p="678,687 960,687 960,645" c={RED} w={2.5} />
    <Bow x={960} y={652} w={14} h={6} c={RED} v />
    <P p="678,701 960,701 960,753" c={ORG} w={2.5} />
    <Bow x={960} y={714} w={18} h={8} c={ORG} v />
    <P p="678,753 1102,753 1102,677" c={RED} w={2.5} />
    <P p="1060,677 1184,677" c={ORG} w={2.5} />
    <Bow x={1043} y={677} w={17} h={11} c={ORG} />
    <P p="1049,672 1047,665" c={ORG} w={1.3} />
    <Bow x={1115} y={677} w={16} h={9} c={ORG} />
    <Box x={1133} y={672} w={9} h={10} c={ORG} />
    <Box x={1144} y={661} w={6} h={13} c={ORG} />
    <Box x={1155} y={661} w={10} h={10} c={ORG} />
    <P p="1160,671 1160,677" c={ORG} />
    <DropValve x={1163} y={678} h={26} />
    <Small x={1174} y={703} t="DN25" v />
    <rect x={1184} y={633} width={42} height={66} fill="none" stroke={GRN} strokeWidth={2} />
    <Cad x={1203} y={692} fontSize={8} textLength={48} lengthAdjust="spacingAndGlyphs" transform="rotate(-90 1203 692)">风冷冷热水机组</Cad>
    <P p="1206,638 1206,695" w={1} />
    <Cad x={1218} y={692} fontSize={12} $w={400} textLength={52} lengthAdjust="spacingAndGlyphs" transform="rotate(-90 1218 692)">YCAE-61RCx4</Cad>

    {/* heat exchanger loop */}
    <Therm x={816} y={672} />
    <Gauge x={833} y={671} />
    <Air x={851} y={675} />
    <Air x={879} y={675} />
    <Gauge x={892} y={671} />
    <Therm x={907} y={672} />
    <rect x={859} y={682} width={14} height={30} fill="#0d5c1c" stroke="#22e022" strokeWidth={1.5} />
    <circle cx={863} cy={688} r={2} fill="#22e022" /><circle cx={869} cy={688} r={2} fill="#22e022" />
    <circle cx={863} cy={701} r={2} fill="#22e022" /><circle cx={869} cy={701} r={2} fill="#22e022" />
    <path d="M860 706h12v6h-12zM863 706v6M866 706v6M869 706v6" fill="#22e022" stroke="#0d5c1c" strokeWidth=".7" />
    <Box x={831} y={703} w={6} h={15} c={ORG} />
    <DropValve x={848} y={702} h={28} />
    <DropValve x={878} y={702} h={28} />
    <Box x={892} y={703} w={6} h={15} c={ORG} />
    <Small x={860} y={725} t="DN40" v len={14} />
    <Small x={890} y={725} t="DN40" v len={14} />
    <P p="864,712 857,743 815,743" w={1} />
    <Label x={815} y={740} t="管壳式换热器" len={41} />

    {/* pipe labels */}
    <Small x={686} y={651} t="DN150" />
    <Small x={777} y={651} t="DN100" />
    <Small x={936} y={651} t="DN150" />
    <Small x={686} y={695} t="DN40" />
    <Small x={940} y={684} t="DN50" />
    <Small x={686} y={708} t="DN70" />
    <Small x={940} y={708} t="DN70" />
    <Small x={686} y={759} t="DN125" />
    <Small x={932} y={759} t="DN100" />
    <Small x={991} y={651} t="DN100" />
    <Small x={1008} y={684} t="DN70" />
    <Small x={1073} y={684} t="DN100" />
    <Small x={1067} y={759} t="DN125" />
    <Small x={1166} y={651} t="DN100" />
    <Small x={1166} y={675} t="DN100" />
    <Small x={992} y={669} t="DN50" v />
    <Small x={1107} y={720} t="DN100" v />
    <Small x={796} y={630} t="DN100" v />
    <Small x={952} y={630} t="DN100" v />
    <Small x={756} y={617} t="DN32" v />

    {/* left labels */}
    <Cad x={556} y={649} fontSize={12} $w={400} textLength={74} lengthAdjust="spacingAndGlyphs">回水(12℃/50℃)</Cad>
    <Label x={604} y={690} t="凝结回水" len={29} size={9} />
    <Label x={604} y={705} t="市政蒸汽" len={29} size={9} />
    <Cad x={558} y={757} fontSize={12} $w={400} textLength={70} lengthAdjust="spacingAndGlyphs">供水(7℃/60℃)</Cad>
    <Arrow x1={638} x2={669} y={645} c={ORG} />
    <Arrow x1={669} x2={638} y={687} c={RED} />
    <Arrow x1={638} x2={669} y={702} c={ORG} />
    <Arrow x1={669} x2={638} y={753} c={RED} />

    <Cad x={884} y={837} fontSize={13} textLength={106} lengthAdjust="spacingAndGlyphs">机房空调系统原理图</Cad>
    <P p="875,841 1015,841" w={1.5} />
    <P p="875,845 1015,845" w={1.5} />

    {/* legend */}
    <P p="1033,551 1113,551" c={ORG} w={2} />
    <P p="1033,572.5 1113,572.5" c="#0a1fa8" w={3} />
    <Label x={1145} y={555} t="供水管" len={18} />
    <Label x={1145} y={577} t="回水管" len={18} />
    {legend.map(([y, t]) => (
      <Label key={t} x={1298} y={y + 3} t={t} len={t.length * 6.7} />
    ))}
    <Bow x={1260} y={456} w={17} h={9} />
    <path d="M1268 475v14" stroke={RED} strokeWidth="5" />
    <Gauge x={1268} y={506} />
    <path d="M1264 537h8v11h-8zM1268 533v4" fill="none" stroke={RED} strokeWidth="1.6" />
    <Air x={1268} y={562} />
    <path d="M1259 590h19v9h-6v6h-8v-6h-5z" fill="none" stroke={RED} strokeWidth="1.6" />
    <Box x={1263} y={615} w={11} h={11} />
    <path d="M1253 642h6v12h-6zM1259 644h6v8h-6zM1268 642l8 4v6l-8 4zM1276 642h6v12h-6z" fill="none" stroke={RED} strokeWidth="1.8" />
    <path d="M1260 677v-5l7 3-3 3M1270 670l10 6v5" fill="none" stroke={RED} strokeWidth="1.5" />
    <Bow x={1268.5} y={689} w={12} h={5} c={ORG} v />
    <Box x={1266} y={701} w={6} h={12} c={ORG} />
    <Box x={1263} y={720} w={10} h={9} c={ORG} />
    <P p="1268,729 1268,735" c={ORG} />
    <rect x={1260} y={742} width={17} height={10} fill={RED} />
    <Bow x={1262} y={771} w={16} h={11} c={ORG} />
    <P p="1265,765 1263,761" c={ORG} w={1.3} />
    <rect x={1260} y={788} width={17} height={10} fill={RED} />
    <P p="1262,793 1275,793" c="#c23a3a" w={1} />

    {/* title block */}
    <P p="1567,1041 994,1041 994,1143" w={2.4} />
    <P p="1567,1043.5 1130,1043.5" w={1} />
    <P p="1130,1041 1130,1143" w={1.6} />
    <P p="1321,1041 1321,1143" w={1.4} />
    <P p="1375,1041 1375,1143" w={1.2} />
    <P p="1429,1041 1429,1143" w={1.2} />
    <P p="1484,1041 1484,1143" w={1.2} />
    <P p="1538,1041 1538,1143" w={1.4} />
    <P p="1130,1068 1567,1068" w={1.4} />
    <P p="994,1095 1130,1095" w={1.4} />
    <P p="1321,1095 1567,1095" w={1.4} />
    <P p="994,1123 1130,1123" w={1.2} />
    <P p="1062,1095 1062,1143" w={1.2} />
    <Label x={1328} y={1059} t="审  定" len={26} size={10} />
    <Label x={1431} y={1059} t="专业负责人" len={39} size={9} />
    <Label x={1547} y={1063} t="图" len={10} size={10} />
    <Label x={1328} y={1086} t="院  审" len={26} size={10} />
    <Label x={1440} y={1086} t="复  核" len={26} size={10} />
    <Label x={1547} y={1087} t="专" len={10} size={10} />
    <Label x={1328} y={1113} t="室  审" len={26} size={10} />
    <Label x={1440} y={1113} t="校  对" len={26} size={10} />
    <Label x={1547} y={1114} t="日" len={10} size={10} />
    <Label x={1323} y={1140} t="项目负责人" len={38} size={9} />
    <Label x={1440} y={1140} t="绘  图" len={26} size={10} />
    <Label x={1547} y={1140} t="第5" len={18} size={11} />
    <Label x={1000} y={1113} t="资质证书编号" len={42} size={9} />
    <Label x={996} y={1140} t="注册师印章编号" len={49} size={9} />
    <Cad x={1186} y={1116} fontSize={17} $w={400} textLength={80} lengthAdjust="spacingAndGlyphs">空调系统图</Cad>

    {/* view cube */}
    <circle cx={1490} cy={198} r={50} fill="none" stroke="#474c55" strokeWidth={10} />
    <rect x={1467} y={175} width={48} height={47} fill="#9a9b9d" />
    <rect x={1471} y={184} width={36} height={30} fill="#8a8b8e" />
    <Cad x={1490} y={206} fontSize={22} $w={400} textAnchor="middle" $c="#6e7073">上</Cad>
    <Cad x={1490} y={155} fontSize={17} textAnchor="middle" $c="#8b8e93">北</Cad>
    <Cad x={1490} y={260} fontSize={17} textAnchor="middle" $c="#8b8e93">南</Cad>
    <Cad x={1438} y={206} fontSize={17} textAnchor="middle" $c="#8b8e93">西</Cad>
    <Cad x={1543} y={206} fontSize={17} textAnchor="middle" $c="#8b8e93">东</Cad>
    <rect x={1468} y={279} width={45} height={16} rx={4} fill="#7b7f8c" />
    <text x={1473} y={291} fontSize={11} fontFamily="Liberation Sans" fill="#a6aab4">WCS</text>
    <path d="M1501 287h6" stroke="#a6aab4" />
  </CanvasSvg>
)

export default function App() {
  return (
    <>
      <Global />
      <Shell>
        <TitleBar>
          <Qat>
            <AppLogo>A</AppLogo>
            <Chev>▼</Chev>
            <Gap $w={13} />
            {['doc', 'open', 'save', 'saveas', 'phone', 'tablet', 'print'].map(n => <QatBtn key={n}><Icon n={n} /></QatBtn>)}
            <QatBtn><Icon n="undo" /></QatBtn><Chev>▼</Chev>
            <QatBtn><Icon n="redoD" /></QatBtn><Chev $c="#7f8894">▼</Chev>
            <Chev>▼</Chev>
            <QatBtn><Icon n="share" /></QatBtn>
            <ShareText>共享</ShareText>
          </Qat>
          <DocTitle>Autodesk AutoCAD 2022    办公楼空调设计图.dwg</DocTitle>
          <TitleRight>
            <Chev $w={8}>▶</Chev>
            <SearchBox>键入关键字或短语</SearchBox>
            <WinBtn $w={25}><Search size={14} color="#cfd4da" /></WinBtn>
            <QatBtn><Icon n="user" s={15} /></QatBtn>
            <UserName>1505999135...</UserName>
            <Chev>▼</Chev>
            <WinBtn $w={24}><ShoppingCart size={13} color="#cfd4da" /></WinBtn>
            <QatBtn><Icon n="acad" s={15} /></QatBtn>
            <Chev>▼</Chev>
            <Gap $w={5} />
            <Sep $w={2} />
            <Gap $w={4} />
            <QatBtn><Icon n="help" s={15} /></QatBtn>
            <Chev>▼</Chev>
            <Gap $w={54} />
            <WinBtn $w={22} $f={13}>_</WinBtn>
            <WinBtn $w={24} $f={14}>☐</WinBtn>
            <WinBtn $w={26} $f={16}>X</WinBtn>
          </TitleRight>
        </TitleBar>
        <MenuBar>
          {menus.map(m => <span key={m}>{m}</span>)}
          <MenuRight>
            <WinBtn $w={14} $f={13}>_</WinBtn>
            <WinBtn $w={14} $f={12}>❐</WinBtn>
            <WinBtn $w={16} $f={15}>X</WinBtn>
          </MenuRight>
        </MenuBar>
        <Tabs>
          <Tab $w={115} $pad={10}>开始</Tab>
          <Tab $w={130} $pad={9} $on>办公楼空调设计图*<span>✕</span></Tab>
          <TabPlus>+</TabPlus>
        </Tabs>
        <Band>
          <ToolRow $h={27} $pad={9.5} $top={2}>
            <Tools groups={row1a} />
            <Sep />
            <Btn><Icon n="undo" /></Btn><Chev>▼</Chev>
            <Btn><Icon n="redo" /></Btn><Chev>▼</Chev>
            <Sep />
            <Tools groups={row1b} />
            <Sep $w={7} $grip />
            <Btn><Icon n="layers" /></Btn>
            <Combo $w={278} $ml={5}>
              <Icon n="bulb" s={15} /><Icon n="sun" s={15} /><Gap $w={3} /><Icon n="freeze" s={17} /><Icon n="lock" s={15} />
              <Gap $w={3} />
              <Swatch />
              <Gap $w={9} />
              J06-DG
              <ComboArrow>v</ComboArrow>
            </Combo>
            <Btn><Icon n="layerP" /></Btn>
            <Btn><Icon n="layerW" /></Btn>
            <Btn><Icon n="layers" /></Btn>
            <Sep $w={9} $grip />
            <Combo $w={138} $h={21}><Swatch $s={13} $s2={15} /><Gap $w={4} />ByLayer<ComboArrow>v</ComboArrow></Combo>
            <Combo $w={148} $ml={5}><RuleLine $w={58} />ByLayer<ComboArrow>v</ComboArrow></Combo>
            <Combo $w={116} $ml={6}><RuleLine $w={32} />ByLayer<ComboArrow>v</ComboArrow></Combo>
            <Combo $w={111} $ml={5} $c="#9a9a9a">ByColor<ComboArrow>v</ComboArrow></Combo>
          </ToolRow>
          <ToolRow $h={25} $pad={9.5} $top={2}>
            {['book', 'bookok', 'stack'].map(n => <Btn key={n}><Icon n={n} /></Btn>)}
            <Sep $w={10} $grip />
            <Tools groups={row2a} />
            <Combo $w={112} $h={20} $ml={4}><Gap $w={13} />DIM<ComboArrow>v</ComboArrow></Combo>
            <Btn><Icon n="dimstyle" /></Btn>
            <Sep $grip />
            <Tools groups={[row2b]} sep={false} />
            <Sep $grip />
            <Tools groups={row2c} />
          </ToolRow>
        </Band>
        <Main>
          <Rail $w={28} $pl={3} $pr={1}>
            <RailPanel>
              <RailGrip />
              {leftTools.map(n => <RailBtn key={n}><Icon n={n} /></RailBtn>)}
            </RailPanel>
          </Rail>
          <Canvas>
            <Drawing />
            <ViewLabel>[−][俯视][二维线框]</ViewLabel>
          </Canvas>
          <Rail $w={31} $pl={4} $pr={5}>
            <RailPanel>
              <RailGrip />
              {rightTools.map(n => <RailBtn key={n}><Icon n={n} /></RailBtn>)}
            </RailPanel>
          </Rail>
        </Main>
        <CmdArea>
          <CmdTool>
            <RailGrip />
            <CmdX>X</CmdX>
            <Wrench size={15} color="#eceef0" fill="#eceef0" style={{ marginTop: 4, transform: 'scaleX(-1)' }} />
          </CmdTool>
          <CmdHistory>选择注释对象或 [放弃(U)/模式(M)]: *取消*</CmdHistory>
          <CmdInput>
            <Icon n="prompt" s={14} />
            <Gap $w={1} />
            键入命令
          </CmdInput>
        </CmdArea>
        <StatusBar>
          <LayoutTab $w={40} $ml={14} $on>模型</LayoutTab>
          <LayoutTab $w={46} $ml={3}>布局1</LayoutTab>
          <LayoutTab $w={20} $ml={3}>+</LayoutTab>
          <StatusRight>
            <StatusGroup><StatusCell $w={27}>模型</StatusCell></StatusGroup>
            <StatusGroup>
              <StatusCell $w={24}><Icon n="grid" /></StatusCell>
              <StatusCell $w={22}><Icon n="snap" /></StatusCell>
              <Chev $w={13}>▼</Chev>
            </StatusGroup>
            <StatusGroup>
              <StatusCell $w={24}><Icon n="ortho" /></StatusCell>
              <StatusCell $w={24}><Icon n="polar" /></StatusCell>
              <Chev $w={13}>▼</Chev>
              <StatusCell $w={24}><Icon n="osnap" /></StatusCell>
              <Chev $w={11}>▼</Chev>
            </StatusGroup>
            <StatusGroup>
              <StatusCell $w={22}><Icon n="angle" /></StatusCell>
              <StatusCell $w={24} $on><Icon n="osbox" /></StatusCell>
              <Chev $w={14}>▼</Chev>
              <StatusCell $w={22}><Icon n="lw" /></StatusCell>
            </StatusGroup>
            <StatusGroup $ml={-3}>
              <StatusCell $w={22} $on><Icon n="annoA" /></StatusCell>
              <StatusCell $w={22}><Icon n="annoB" /></StatusCell>
              <StatusCell $w={22}><Icon n="annoC" /></StatusCell>
              <StatusCell $w={24}>1:1</StatusCell>
              <Chev $w={12}>▼</Chev>
            </StatusGroup>
            <StatusGroup>
              <StatusCell $w={22}><Icon n="gear" /></StatusCell>
              <Chev $w={14}>▼</Chev>
              <StatusCell $w={24}><Icon n="cross" /></StatusCell>
              <StatusCell $w={24}><Icon n="iso" /></StatusCell>
              <StatusCell $w={22}><Icon n="workspace" /></StatusCell>
              <StatusCell $w={22}><Icon n="perf" /></StatusCell>
            </StatusGroup>
            <StatusGroup $ml={2}>
              <StatusCell $w={24}><Icon n="full" /></StatusCell>
              <StatusCell $w={22}><Icon n="menu" /></StatusCell>
            </StatusGroup>
          </StatusRight>
        </StatusBar>
        <StampCn>知末</StampCn>
        <StampId>ID: 1158745670</StampId>
      </Shell>
    </>
  )
}
